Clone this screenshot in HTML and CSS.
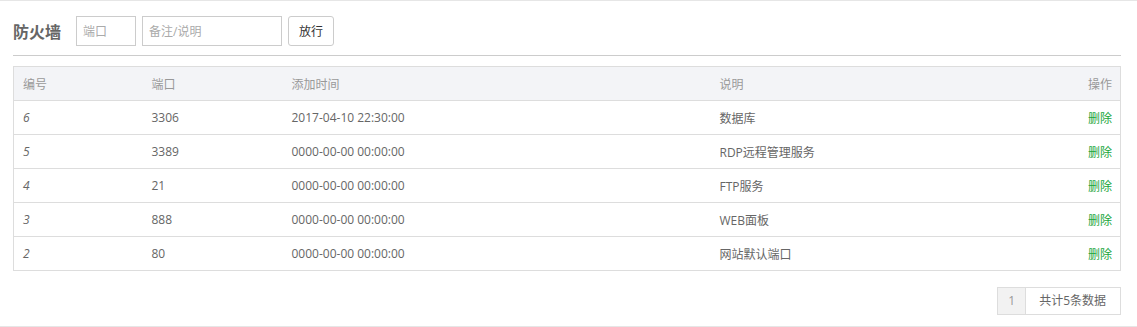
FILE: index.html
```html
<html>

<head>
  <meta charset="utf-8">
  <link rel="stylesheet" href="styles.css">
</head>

<body>
  <div class="panel">
    <div class="toolbar">
      <h3 class="title">防火墙</h3>
      <input type="text" class="port" placeholder="端口">
      <input type="text" class="note" placeholder="备注/说明">
      <button class="allow">放行</button>
    </div>
    <div class="divider"></div>
    <table class="rules">
      <thead>
        <tr>
          <th class="c-id">编号</th>
          <th class="c-port">端口</th>
          <th class="c-time">添加时间</th>
          <th class="c-desc">说明</th>
          <th class="c-op">操作</th>
        </tr>
      </thead>
      <tbody>
        <tr>
          <td><em>6</em></td>
          <td>3306</td>
          <td>2017-04-10 22:30:00</td>
          <td>数据库</td>
          <td class="c-op"><a href="#">删除</a></td>
        </tr>
        <tr>
          <td><em>5</em></td>
          <td>3389</td>
          <td>0000-00-00 00:00:00</td>
          <td>RDP远程管理服务</td>
          <td class="c-op"><a href="#">删除</a></td>
        </tr>
        <tr>
          <td><em>4</em></td>
          <td>21</td>
          <td>0000-00-00 00:00:00</td>
          <td>FTP服务</td>
          <td class="c-op"><a href="#">删除</a></td>
        </tr>
        <tr>
          <td><em>3</em></td>
          <td>888</td>
          <td>0000-00-00 00:00:00</td>
          <td>WEB面板</td>
          <td class="c-op"><a href="#">删除</a></td>
        </tr>
        <tr>
          <td><em>2</em></td>
          <td>80</td>
          <td>0000-00-00 00:00:00</td>
          <td>网站默认端口</td>
          <td class="c-op"><a href="#">删除</a></td>
        </tr>
      </tbody>
    </table>
    <div class="pager">
      <span class="page current">1</span>
      <span class="page total">共计5条数据</span>
    </div>
  </div>
</body>

</html>
```

FILE: styles.css
```css
body {
  margin: 0;
  font-family: "Open Sans", "Noto Sans CJK SC", sans-serif;
  font-size: 12px;
  color: #666;
  background: #fff;
}

.panel {
  border-top: 1px solid #e6e6e6;
  border-bottom: 1px solid #e6e6e6;
  padding: 15px 16px 11px 13px;
}

.toolbar {
  display: flex;
  align-items: center;
  height: 30px;
}

.title {
  margin: 0 15px 0 0;
  font-size: 16px;
  font-weight: bold;
  color: #666;
}

.toolbar input {
  height: 30px;
  box-sizing: border-box;
  border: 1px solid #ccc;
  padding: 0 6px;
  font-family: inherit;
  font-size: 12px;
  color: #666;
  outline: none;
}

.toolbar input::placeholder {
  color: #aaa;
}

.port {
  width: 60px;
  margin-right: 6px;
}

.note {
  width: 140px;
  margin-right: 6px;
}

.allow {
  height: 30px;
  width: 46px;
  border: 1px solid #ccc;
  border-radius: 3px;
  background: #fff;
  font-family: inherit;
  font-size: 12px;
  color: #333;
  padding: 0;
}

.divider {
  margin-top: 9px;
  border-top: 1px solid #ccc;
}

.rules {
  margin-top: 10px;
  width: 100%;
  border-collapse: collapse;
  border: 1px solid #ddd;
  font-size: 12px;
  color: #666;
}

.rules th,
.rules td {
  height: 34px;
  box-sizing: border-box;
  padding: 0 9px;
  text-align: left;
  border-bottom: 1px solid #ddd;
  font-weight: normal;
  white-space: nowrap;
}

.rules th {
  background: #f3f4f7;
  color: #999;
}

.rules em {
  font-style: italic;
}

.c-id {
  width: 129px;
}

.c-port {
  width: 140px;
}

.c-time {
  width: 428px;
}

.rules .c-op {
  text-align: right;
  padding-right: 8px;
}

.c-op a {
  color: #20a53a;
  text-decoration: none;
}

.pager {
  display: flex;
  justify-content: flex-end;
  margin-top: 16px;
}

.page {
  height: 26px;
  line-height: 26px;
  border: 1px solid #ddd;
  padding: 0 10px;
  color: #666;
}

.current {
  background: #f2f2f2;
  color: #999;
}

.total {
  border-left: 0;
  padding: 0 14px 0 13px;
}
```
